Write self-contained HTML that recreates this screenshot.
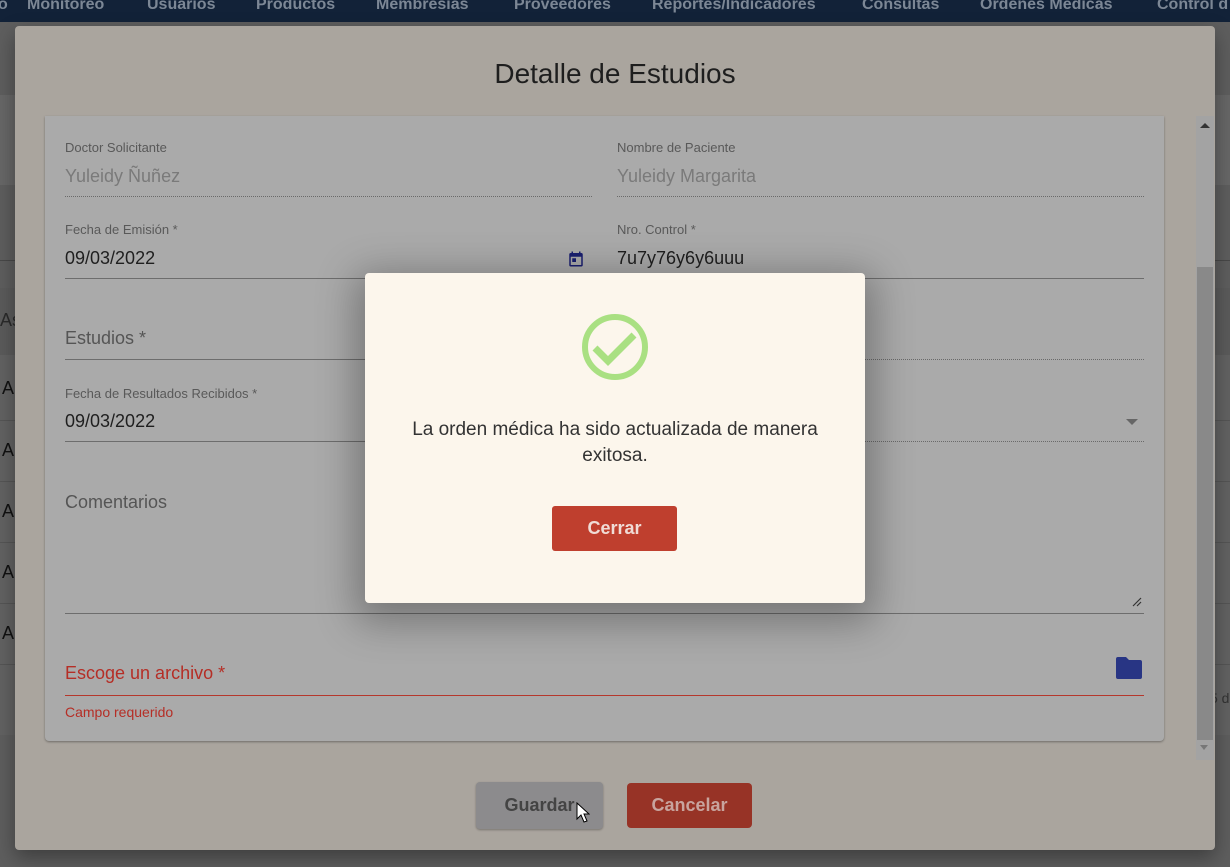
<!DOCTYPE html>
<html><head><meta charset="utf-8">
<style>
*{margin:0;padding:0;box-sizing:border-box}
body{width:1230px;height:867px;overflow:hidden;background:#5e5e5e;font-family:"Liberation Sans",Arial,sans-serif;position:relative}
.a{position:absolute}
.nav{left:0;top:0;width:1230px;height:22px;background:#122238;color:#7c8795;font-size:16px;font-weight:bold;white-space:nowrap}
.nav span{position:absolute;top:-4px}
.lbl{font-size:13px;color:#595959}
.dis{font-size:18px;color:#7a7a7a}
.val{font-size:18px;color:#1f1f1f}
.dot{height:0;border-top:1px dotted #6a6a6a}
.sol{height:1px;background:#6d6d6d}
</style></head><body>
<div class="a nav">
<span style="left:-2px">o</span><span style="left:27px">Monitoreo</span><span style="left:147px">Usuarios</span><span style="left:256px">Productos</span><span style="left:376px">Membresias</span><span style="left:514px">Proveedores</span><span style="left:652px">Reportes/Indicadores</span><span style="left:862px">Consultas</span><span style="left:980px">Ordenes Medicas</span><span style="left:1157px">Control d</span>
</div>
<div class="a" style="left:0;top:95px;width:1230px;height:90px;background:#676767"></div>
<div class="a" style="left:0;top:260px;width:1230px;height:1px;background:#484848"></div>
<div class="a" style="left:0;top:288px;width:1230px;height:70px;background:#5b5b5b"></div>
<div class="a" style="left:0;top:355px;width:1230px;height:380px;background:#626262"></div>
<div class="a" style="left:0;top:420px;width:1230px;height:1px;background:#555"></div>
<div class="a" style="left:0;top:481px;width:1230px;height:1px;background:#555"></div>
<div class="a" style="left:0;top:542px;width:1230px;height:1px;background:#555"></div>
<div class="a" style="left:0;top:603px;width:1230px;height:1px;background:#555"></div>
<div class="a" style="left:0;top:664px;width:1230px;height:1px;background:#555"></div>
<div class="a" style="left:0;top:310px;font-size:18px;color:#2a2a2a">As</div>
<div class="a" style="left:2px;top:378px;font-size:18px;color:#111">A</div>
<div class="a" style="left:2px;top:440px;font-size:18px;color:#111">A</div>
<div class="a" style="left:2px;top:501px;font-size:18px;color:#111">A</div>
<div class="a" style="left:2px;top:562px;font-size:18px;color:#111">A</div>
<div class="a" style="left:2px;top:623px;font-size:18px;color:#111">A</div>
<div class="a" style="left:1210px;top:690px;font-size:14px;color:#333">5 d</div>

<div class="a" style="left:15px;top:26px;width:1200px;height:824px;background:#aaa59e;border-radius:4px;box-shadow:0 8px 20px rgba(0,0,0,.35)"></div>
<div class="a" style="left:0;top:58px;width:1230px;text-align:center;font-size:28px;color:#1e1e1e">Detalle de Estudios</div>
<div class="a" style="left:45px;top:116px;width:1119px;height:625px;background:#aaaaaa;border-radius:0 0 4px 4px;box-shadow:0 1px 2px rgba(0,0,0,.35)"></div>
<div class="a" style="left:1196px;top:116px;width:18px;height:644px;background:#a3a3a3"></div>
<div class="a" style="left:1197px;top:267px;width:16px;height:473px;background:#898989"></div>
<div class="a" style="left:1200px;top:123px;width:0;height:0;border-left:5px solid transparent;border-right:5px solid transparent;border-bottom:5px solid #333"></div>
<div class="a" style="left:1200px;top:745px;width:0;height:0;border-left:4px solid transparent;border-right:4px solid transparent;border-top:5px solid #777"></div>

<div class="a lbl" style="left:65px;top:140px">Doctor Solicitante</div>
<div class="a dis" style="left:65px;top:166px">Yuleidy Ñuñez</div>
<div class="a dot" style="left:65px;top:196px;width:527px"></div>
<div class="a lbl" style="left:617px;top:140px">Nombre de Paciente</div>
<div class="a dis" style="left:617px;top:166px">Yuleidy Margarita</div>
<div class="a dot" style="left:617px;top:196px;width:527px"></div>

<div class="a lbl" style="left:65px;top:222px">Fecha de Emisión *</div>
<div class="a val" style="left:65px;top:248px">09/03/2022</div>
<svg class="a" style="left:567px;top:250px" width="18" height="18" viewBox="0 0 24 24"><path fill="#1a1f70" d="M19 4h-1V2h-2v2H8V2H6v2H5a2 2 0 0 0-2 2v14a2 2 0 0 0 2 2h14a2 2 0 0 0 2-2V6a2 2 0 0 0-2-2zm0 16H5V9h14v11zM7 11h5v5H7z"/></svg>
<div class="a sol" style="left:65px;top:278px;width:527px"></div>
<div class="a lbl" style="left:617px;top:222px">Nro. Control *</div>
<div class="a val" style="left:617px;top:248px">7u7y76y6y6uuu</div>
<div class="a sol" style="left:617px;top:278px;width:527px"></div>

<div class="a" style="left:65px;top:328px;font-size:18px;color:#555">Estudios *</div>
<div class="a sol" style="left:65px;top:359px;width:527px"></div>
<div class="a dot" style="left:617px;top:359px;width:527px"></div>

<div class="a lbl" style="left:65px;top:386px">Fecha de Resultados Recibidos *</div>
<div class="a val" style="left:65px;top:411px">09/03/2022</div>
<div class="a sol" style="left:65px;top:441px;width:527px"></div>
<div class="a dot" style="left:617px;top:441px;width:527px"></div>
<div class="a" style="left:1126px;top:419px;width:0;height:0;border-left:6px solid transparent;border-right:6px solid transparent;border-top:6px solid #666"></div>

<div class="a" style="left:65px;top:492px;font-size:18px;color:#555">Comentarios</div>
<svg class="a" style="left:1132px;top:597px" width="10" height="10" viewBox="0 0 10 10"><path d="M9 1L1 9M9 5L5 9" stroke="#333" stroke-width="1.2"/></svg>
<div class="a sol" style="left:65px;top:613px;width:1079px"></div>

<div class="a" style="left:65px;top:663px;font-size:18px;color:#b52e26">Escoge un archivo *</div>
<svg class="a" style="left:1116px;top:657px" width="26" height="22" viewBox="0 0 26 22"><path fill="#283584" d="M2 0h8l3 3h11a2 2 0 0 1 2 2v15a2 2 0 0 1-2 2H2a2 2 0 0 1-2-2V2a2 2 0 0 1 2-2z"/></svg>
<div class="a" style="left:65px;top:695px;width:1079px;height:1px;background:#b5372c"></div>
<div class="a" style="left:65px;top:704px;font-size:14px;color:#b52e26">Campo requerido</div>

<div class="a" style="left:476px;top:782px;width:127px;height:47px;background:#8c8b8d;border-radius:4px;box-shadow:0 1px 2px rgba(0,0,0,.3);color:#444;font-size:18px;font-weight:bold;text-align:center;line-height:47px">Guardar</div>
<div class="a" style="left:627px;top:783px;width:125px;height:45px;background:#973326;border-radius:4px;color:#c8a49e;font-size:18px;font-weight:bold;text-align:center;line-height:45px">Cancelar</div>
<svg class="a" style="left:576px;top:802px" width="14" height="22" viewBox="0 0 14 22"><path d="M1 1v16l4-4 3 7 3-1-3-7h5z" fill="#fff" stroke="#000" stroke-width="1"/></svg>

<div class="a" style="left:365px;top:273px;width:500px;height:330px;background:#fcf6ec;border-radius:4px;box-shadow:0 10px 40px 10px rgba(0,0,0,.3)"></div>
<svg class="a" style="left:580px;top:312px" width="70" height="70" viewBox="0 0 70 70"><circle cx="35" cy="35" r="30" fill="none" stroke="#a9e082" stroke-width="6"/><path d="M15 36l13 13 26-26" fill="none" stroke="#a9e082" stroke-width="7"/></svg>
<div class="a" style="left:365px;top:417px;width:500px;text-align:center;font-size:19px;line-height:26px;color:#333">La orden médica ha sido actualizada de manera<br>exitosa.</div>
<div class="a" style="left:552px;top:506px;width:125px;height:45px;background:#bf3f2e;border-radius:3px;color:#f0dcd6;font-size:18px;font-weight:bold;text-align:center;line-height:45px">Cerrar</div>
</body></html>
